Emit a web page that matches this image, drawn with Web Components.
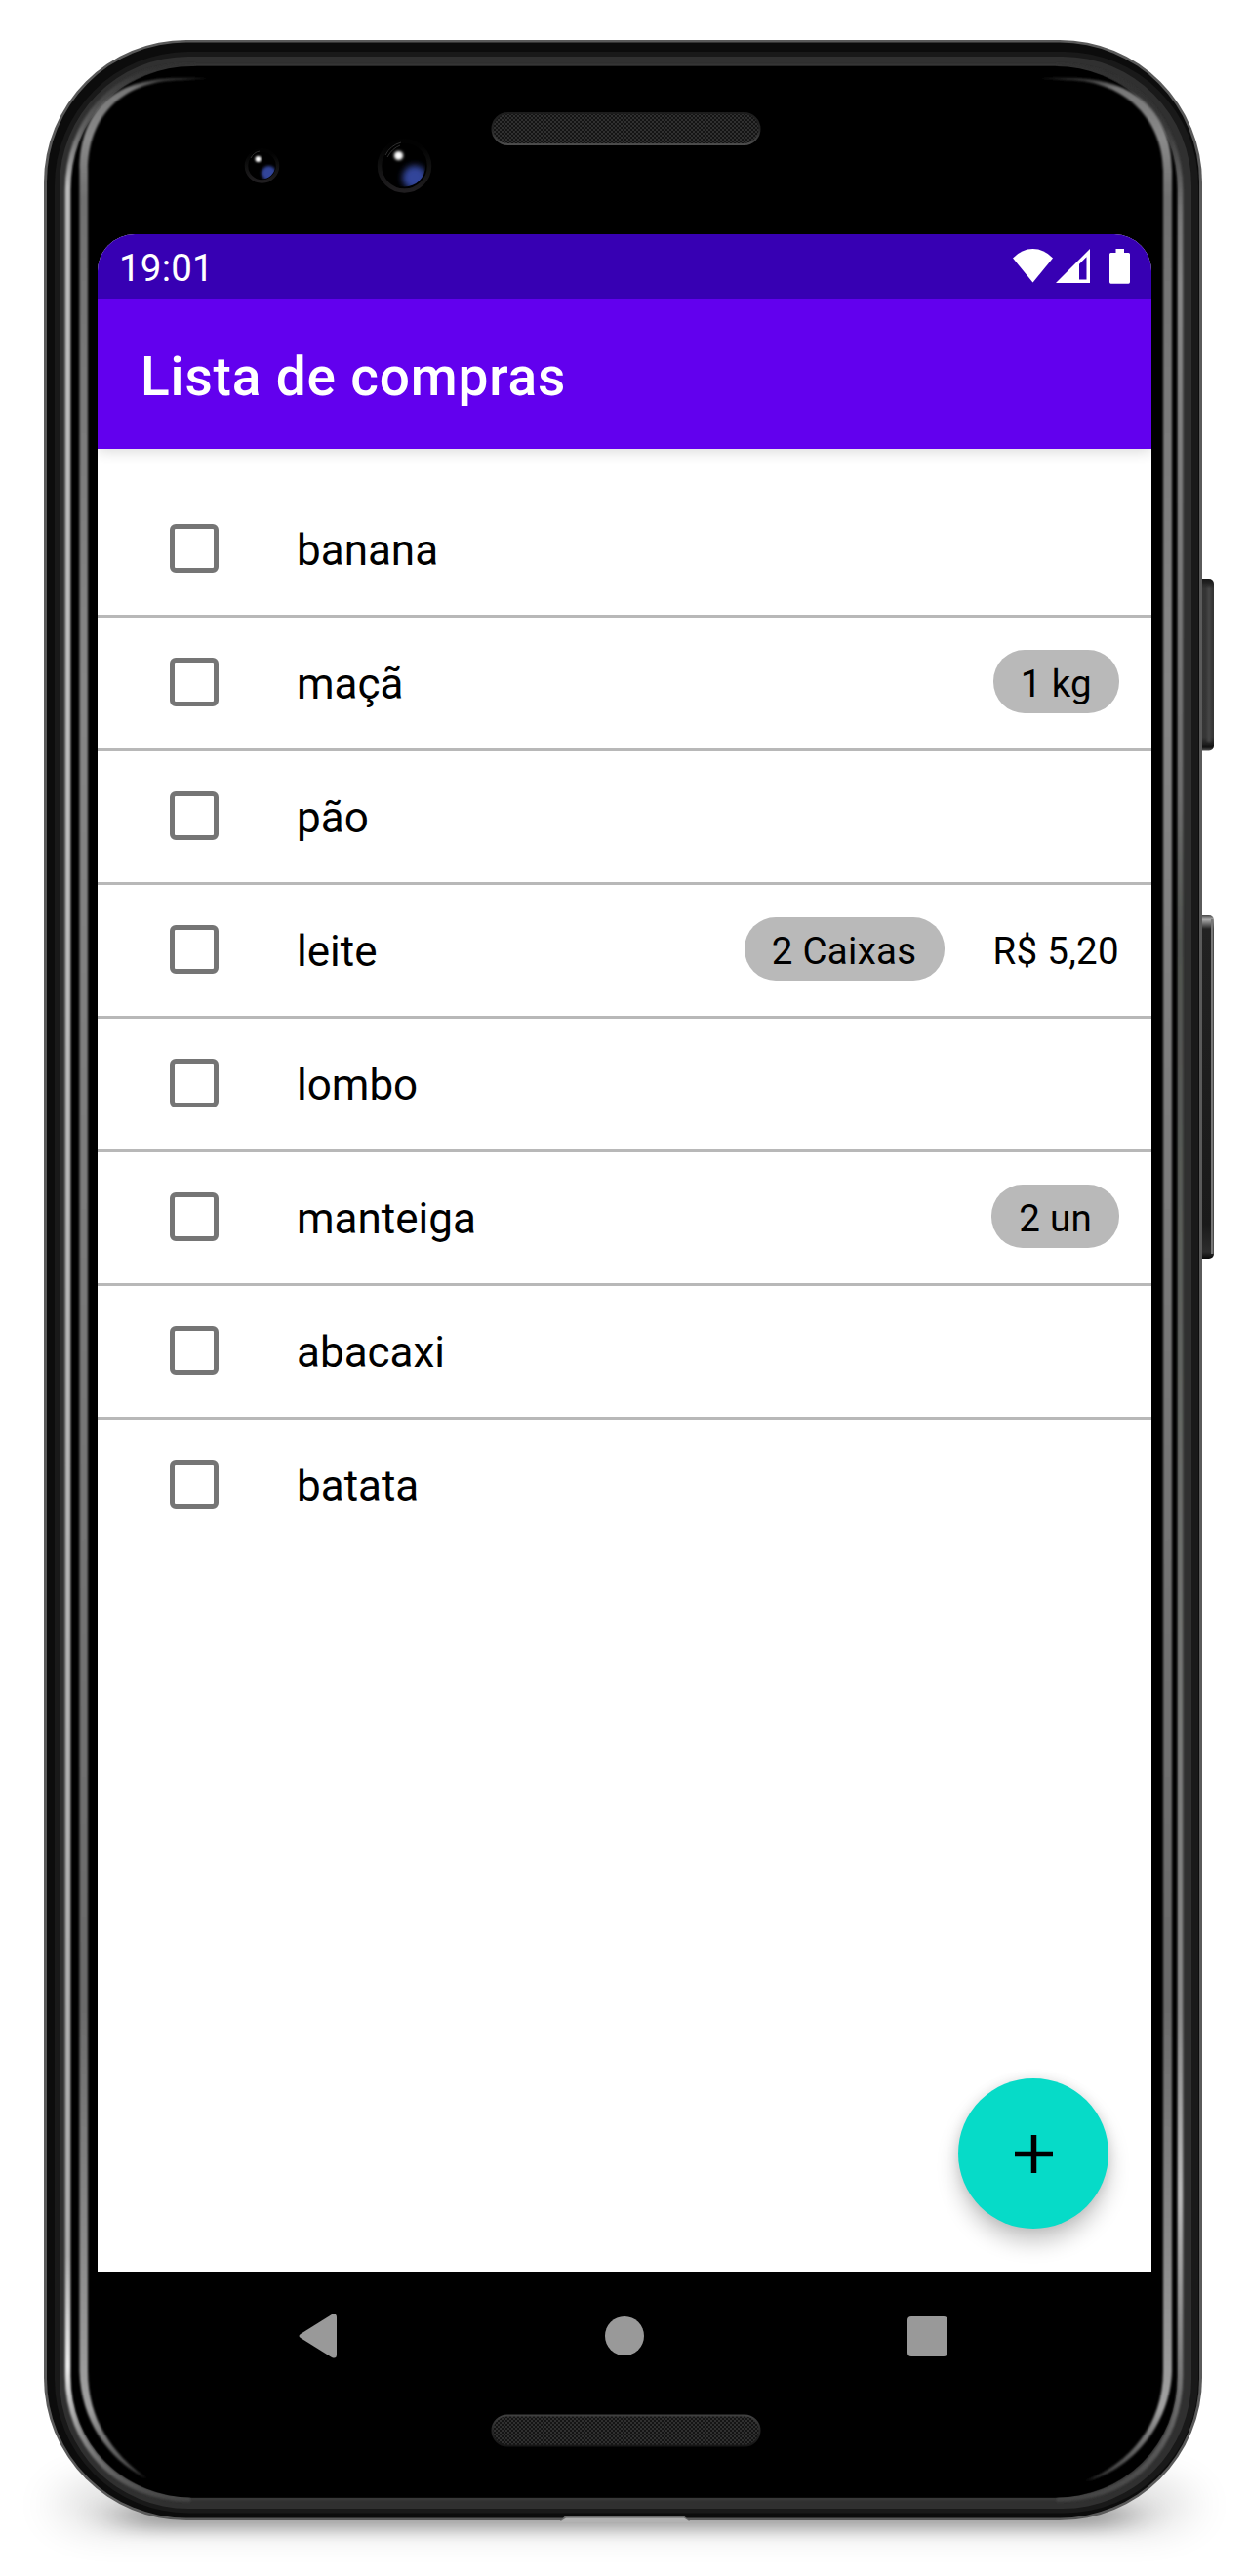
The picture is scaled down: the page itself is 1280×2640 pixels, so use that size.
<!DOCTYPE html>
<html lang="pt-BR">
<head>
<meta charset="utf-8">
<title>Lista de compras</title>
<style>
body { margin: 0; background: #fff; font-family: Roboto, sans-serif; }
</style>
</head>
<body>
<phone-frame>
  <status-bar>19:01</status-bar>
  <app-bar>Lista de compras</app-bar>
  <shopping-list>
    <shopping-item>banana</shopping-item>
    <shopping-item quantity="1 kg">maçã</shopping-item>
    <shopping-item>pão</shopping-item>
    <shopping-item quantity="2 Caixas" price="R$ 5,20">leite</shopping-item>
    <shopping-item>lombo</shopping-item>
    <shopping-item quantity="2 un">manteiga</shopping-item>
    <shopping-item>abacaxi</shopping-item>
    <shopping-item>batata</shopping-item>
  </shopping-list>
  <add-button slot="floating"></add-button>
  <nav-bar slot="navigation"></nav-bar>
</phone-frame>

<template id="phone-frame">
  <style>
    :host { display: block; position: relative; box-sizing: border-box; width: 1280px; height: 2640px; padding: 240px 100px 0; overflow: hidden; }
    .art { position: absolute; left: 0; top: 0; z-index: 0; }
    .screen { position: relative; display: flex; flex-direction: column; height: 2088px; background: #fff; border-radius: 38px 38px 0 0; overflow: hidden; }
    .floating { position: absolute; right: 44px; bottom: 44px; }
    .nav { position: relative; }
  </style>
  <svg class="art" width="1280" height="2640" viewBox="0 0 1280 2640">
    <defs>
      <filter id="b1" x="1220" y="580" width="40" height="200" filterUnits="userSpaceOnUse"><feGaussianBlur stdDeviation="1"/></filter>
      <filter id="soft" filterUnits="userSpaceOnUse" x="0" y="0" width="1280" height="2640"><feGaussianBlur stdDeviation="0.9"/></filter>
      <filter id="sh1" filterUnits="userSpaceOnUse" x="0" y="2400" width="1280" height="240"><feGaussianBlur stdDeviation="24 8"/></filter>
      <filter id="sh2" filterUnits="userSpaceOnUse" x="0" y="2400" width="1280" height="240"><feGaussianBlur stdDeviation="26 18"/></filter>
      <filter id="lens" filterUnits="userSpaceOnUse" x="230" y="120" width="240" height="100"><feGaussianBlur stdDeviation="1.6"/></filter>
      <filter id="glow" filterUnits="userSpaceOnUse" x="230" y="120" width="240" height="100"><feGaussianBlur stdDeviation="3"/></filter>
      <linearGradient id="rimL" gradientUnits="userSpaceOnUse" x1="0" y1="67" x2="0" y2="2562">
        <stop offset="0" stop-color="#303030"/><stop offset=".025" stop-color="#606060"/><stop offset=".05" stop-color="#bbb"/>
        <stop offset=".3" stop-color="#bdbdbd"/><stop offset=".9" stop-color="#adadad"/><stop offset=".945" stop-color="#eee"/>
        <stop offset=".975" stop-color="#888"/><stop offset="1" stop-color="#444"/>
      </linearGradient>
      <linearGradient id="rimR" gradientUnits="userSpaceOnUse" x1="0" y1="67" x2="0" y2="2562">
        <stop offset="0" stop-color="#303030"/><stop offset=".025" stop-color="#383838"/><stop offset=".06" stop-color="#777"/><stop offset=".09" stop-color="#888"/>
        <stop offset=".3" stop-color="#6d6d6d"/><stop offset=".36" stop-color="#50534f"/><stop offset=".5" stop-color="#5c5f5b"/><stop offset=".8" stop-color="#8a8a8a"/>
        <stop offset=".875" stop-color="#bcbcbc"/><stop offset=".94" stop-color="#808080"/><stop offset="1" stop-color="#444"/>
      </linearGradient>
      <linearGradient id="edge" gradientUnits="userSpaceOnUse" x1="0" y1="80" x2="0" y2="2543">
        <stop offset="0" stop-color="#2a2a2a"/><stop offset=".004" stop-color="#777"/><stop offset=".025" stop-color="#8a8a8a"/><stop offset=".05" stop-color="#707070"/>
        <stop offset=".25" stop-color="#868686"/><stop offset=".8" stop-color="#6a6a6a"/><stop offset=".97" stop-color="#a0a0a0"/><stop offset="1" stop-color="#333"/>
      </linearGradient>
      <linearGradient id="vol" x1="0" y1="0" x2="0" y2="1">
        <stop offset="0" stop-color="#444"/><stop offset=".012" stop-color="#aaa"/><stop offset=".04" stop-color="#222"/><stop offset=".9" stop-color="#1a1a1a"/><stop offset=".98" stop-color="#2c2c2c"/><stop offset="1" stop-color="#080808"/>
      </linearGradient>
      <linearGradient id="pow" x1="0" y1="0" x2="0" y2="1">
        <stop offset="0" stop-color="#161616"/><stop offset=".06" stop-color="#343434"/><stop offset=".92" stop-color="#363636"/><stop offset=".98" stop-color="#111"/><stop offset="1" stop-color="#555"/>
      </linearGradient>
      <linearGradient id="ringTone" x1="0" y1="0" x2="0" y2="1">
        <stop offset=".1" stop-color="#020202"/><stop offset=".5" stop-color="#101010"/><stop offset="1" stop-color="#201e20"/>
      </linearGradient>
      <linearGradient id="topLip" x1="0" y1="0" x2="0" y2="1"><stop offset="0" stop-color="#1c1c1c"/><stop offset=".5" stop-color="#242424"/><stop offset="1" stop-color="#4c4c4c"/></linearGradient>
      <linearGradient id="bottomLip" x1="0" y1="0" x2="0" y2="1"><stop offset="0" stop-color="#404040"/><stop offset=".5" stop-color="#262626"/><stop offset="1" stop-color="#161616"/></linearGradient>
      <pattern id="mesh" width="4" height="4" patternUnits="userSpaceOnUse">
        <rect width="4" height="4" fill="#141414"/><rect width="2" height="2" fill="#303030"/><rect x="2" y="2" width="2" height="2" fill="#303030"/>
      </pattern>
      <clipPath id="c1"><circle cx="268.5" cy="170" r="13.5"/></clipPath>
      <clipPath id="c2"><circle cx="414.5" cy="170" r="21.5"/></clipPath>
    </defs>

    <rect x="65" y="2540" width="1150" height="54" rx="27" fill="#000" opacity=".13" filter="url(#sh2)"/>
    <rect x="124" y="2566" width="1032" height="26" rx="13" fill="#000" opacity=".3" filter="url(#sh1)"/>

    <rect x="1224" y="593" width="20" height="176.500" rx="5" fill="url(#pow)"/>
    <rect x="1237" y="602" width="4" height="158" fill="#444" filter="url(#b1)"/>
    <rect x="1224" y="938" width="20" height="352" rx="5" fill="url(#vol)"/>
    <rect x="1241" y="942" width="2.500" height="343" fill="#777"/>

    <rect x="45" y="41" width="1187" height="2542" rx="146" fill="#5a5a5a"/>
    <rect x="48" y="43.500" width="1181" height="2537" rx="143" fill="#0c0c0c"/>
    <rect x="56" y="53" width="1172" height="2522.500" rx="137" fill="#191919"/>
    <rect x="61" y="58" width="1160" height="2513" rx="132" fill="#303030"/>
    <rect x="72" y="67" width="1135" height="2493" rx="124" fill="#000"/>
    <g fill="none" filter="url(#soft)">
      <path d="M190 67.500H1090M190 2561H1090" stroke="#3e3e3e" stroke-width="2"/>
      <path d="M200 68H195C115 68 69.500 125 69.500 195V2435C69.500 2505 120 2561 195 2561" stroke="url(#rimL)" stroke-width="5.500"/>
      <path d="M1083 68C1163 68 1209.500 125 1209.500 195V2435C1209.500 2505 1163 2561 1083 2561" stroke="url(#rimR)" stroke-width="5.500"/>
    </g>
    <rect x="74.500" y="68" width="1130" height="2491.500" rx="122" fill="#000"/>
    <g fill="url(#edge)" filter="url(#soft)">
      <path d="M214 80H185C118 79 81.500 112 81.500 175V2430C83 2480 110 2520 150 2540C115 2514 90 2480 90 2430V175C90 122 122 83 185 82Z"/>
      <path d="M1065 80H1095C1162 79 1201 115 1201 175V2430C1199 2485 1160 2532 1112 2543C1158 2524 1192 2485 1192 2430V175C1192 125 1155 83 1095 82Z"/>
    </g>
    <path d="M574 2584L579 2578.500H701L707 2584Z" fill="#6b6b6b"/>
    <path d="M573 2585L580 2580.500H701L708 2585Z" fill="#b2b2b2"/>

    <rect x="504.500" y="116" width="274" height="32" rx="16" fill="url(#mesh)" stroke="url(#topLip)" stroke-width="2"/>
    <rect x="504.500" y="2475.500" width="274" height="31" rx="15.500" fill="url(#mesh)" stroke="url(#bottomLip)" stroke-width="2"/>

    <circle cx="268.500" cy="170" r="16" fill="#000" stroke="url(#ringTone)" stroke-width="3.500"/>
    <g clip-path="url(#c1)"><circle cx="275.500" cy="177.500" r="7.500" fill="#33459a" filter="url(#lens)"/></g>
    <path d="M257 162Q260 156 266 155" fill="none" stroke="#2b2b2b"/>
    <circle cx="264.500" cy="163" r="3" fill="#fff" filter="url(#soft)"/>
    <circle cx="414.500" cy="170" r="25.500" fill="#000" stroke="url(#ringTone)" stroke-width="4.500"/>
    <g clip-path="url(#c2)"><circle cx="425" cy="182" r="12.500" fill="#33459a" filter="url(#glow)"/></g>
    <path d="M395 159Q400 149 411 146M397 161Q402 152 410 149" fill="none" stroke="#303030"/>
    <circle cx="408.500" cy="159.500" r="4.600" fill="#fff" filter="url(#lens)"/>
  </svg>
  <div class="screen"><slot></slot><div class="floating"><slot name="floating"></slot></div></div>
  <div class="nav"><slot name="navigation"></slot></div>
</template>

<template id="status-bar">
  <style>
    :host { display: flex; position: relative; z-index: 1; align-items: center; justify-content: space-between; box-sizing: border-box; height: 66px; flex: none; padding: 0 20px 0 22px; background: #3700b3; color: #fff; font-size: 38.5px; letter-spacing: .2px; line-height: 66px; }
    .time { padding-top: 4px; }
    svg { display: block; }
  </style>
  <span class="time"><slot></slot></span>
  <svg width="124" height="66" viewBox="1036 240 124 66" fill="#fff">
    <path d="M1038 264.500Q1047 255 1058.500 255T1079 264.500L1058.500 289.500Z"/>
    <path fill-rule="evenodd" d="M1117 255V290H1082ZM1106 270.700V286.500H1113.500V263.200Z"/>
    <path d="M1143.500 255H1152V259H1156.500Q1158 259 1158 260.500V289Q1158 290.800 1156.500 290.800H1138.500Q1137 290.800 1137 289V260.500Q1137 259 1138.500 259H1143.500Z"/>
  </svg>
</template>

<template id="app-bar">
  <style>
    :host { display: flex; align-items: center; box-sizing: border-box; height: 154px; flex: none; padding: 5px 44px 0; background: #6200ee; color: #fff; font-size: 55px; font-weight: 500; letter-spacing: .83px; box-shadow: 0 2px 14px rgba(0,0,0,.16); }
  </style>
  <slot></slot>
</template>

<template id="shopping-list">
  <style>:host { display: flex; flex-direction: column; padding-top: 36px; }</style>
  <slot></slot>
</template>

<template id="shopping-item">
  <style>
    :host { display: flex; align-items: center; box-sizing: border-box; height: 137px; padding: 0 33px 0 74px; border-bottom: 3px solid #b8b8b8; color: #000; font-size: 44px; }
    :host(:last-of-type) { border-bottom-color: transparent; }
    .box { box-sizing: border-box; width: 50px; height: 50px; margin: -2px 80px 0 0; border: 5.5px solid #757575; border-radius: 6px; }
    .name { flex: 1; padding-top: 2px; }
    .meta { display: flex; align-items: center; gap: 50px; font-size: 38.5px; letter-spacing: .3px; line-height: 45px; }
    .chip { box-sizing: border-box; height: 65px; padding: 12px 28px 8px; margin-top: -3px; border-radius: 32px; background: #b9b9b9; }
    [hidden] { display: none; }
  </style>
  <span class="box"></span>
  <span class="name"><slot></slot></span>
  <span class="meta"><span class="chip"></span><span class="price"></span></span>
</template>

<template id="add-button">
  <style>
    :host { display: grid; place-items: center; width: 154px; height: 154px; border-radius: 50%; background: #06dbc8; box-shadow: 0 14px 22px rgba(0,0,0,.22), 0 0 12px rgba(0,0,0,.1); }
  </style>
  <svg width="39" height="39" viewBox="0 0 39 39"><path d="M0 19.500H39M19.500 0V39" stroke="#000" stroke-width="5.500"/></svg>
</template>

<template id="nav-bar">
  <style>
    :host { display: grid; grid-template-columns: 1fr auto 1fr; align-items: center; box-sizing: border-box; height: 132px; padding: 0 209px 0 206px; }
    svg { display: block; }
    .home { margin-left: 3px; }
    .recent { justify-self: end; }
  </style>
  <svg width="39" height="46" viewBox="0 0 39 46"><path d="M2 21L34 1Q39-1 39 4V42Q39 47 34 45L2 25Q-1 23 2 21Z" fill="#999"/></svg>
  <svg class="home" width="40" height="40" viewBox="0 0 40 40"><circle cx="20" cy="20" r="20" fill="#999"/></svg>
  <svg class="recent" width="41" height="41" viewBox="0 0 41 41"><rect width="41" height="41" rx="4" fill="#999"/></svg>
</template>

<script>
class TemplateElement extends HTMLElement {
  constructor() {
    super();
    const template = document.getElementById(this.localName);
    this.attachShadow({ mode: 'open' }).append(template.content.cloneNode(true));
  }
}
class ShoppingItem extends TemplateElement {
  connectedCallback() {
    for (const [cls, attr] of [['chip', 'quantity'], ['price', 'price']]) {
      const el = this.shadowRoot.querySelector('.' + cls);
      el.textContent = this.getAttribute(attr) || '';
      el.hidden = !this.hasAttribute(attr);
    }
  }
}
customElements.define('phone-frame', class extends TemplateElement {});
customElements.define('status-bar', class extends TemplateElement {});
customElements.define('app-bar', class extends TemplateElement {});
customElements.define('shopping-list', class extends TemplateElement {});
customElements.define('shopping-item', ShoppingItem);
customElements.define('add-button', class extends TemplateElement {});
customElements.define('nav-bar', class extends TemplateElement {});
</script>
</body>
</html>
